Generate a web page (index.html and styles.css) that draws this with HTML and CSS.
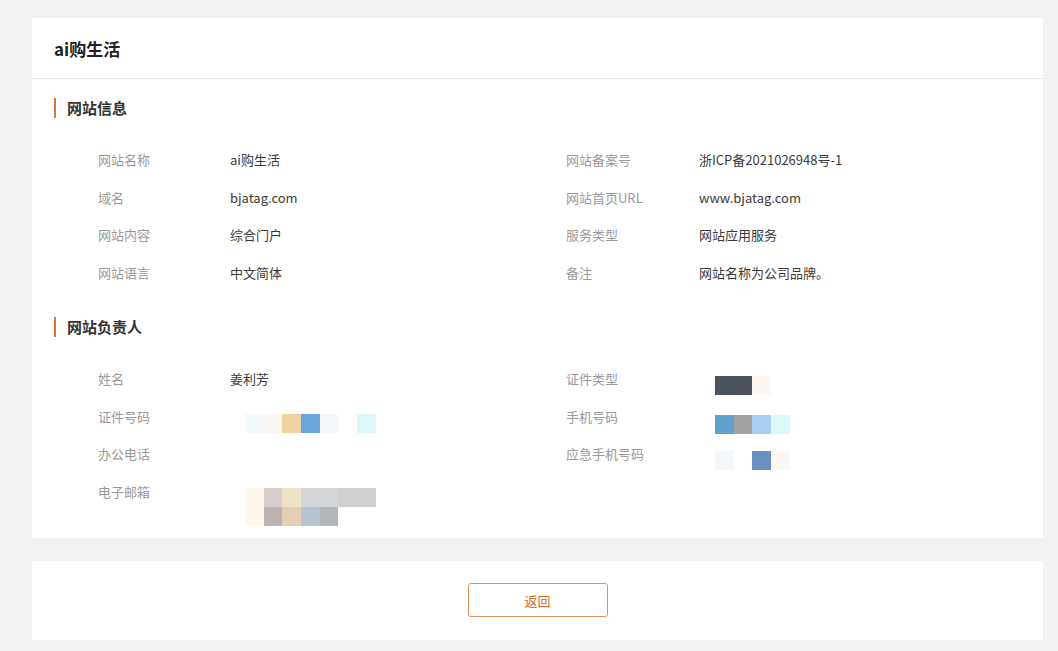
FILE: index.html
```html
<!DOCTYPE html>
<html lang="zh-CN">
<head>
  <meta charset="UTF-8" />
  <meta name="viewport" content="width=device-width, initial-scale=1" />
  <title>ai购生活</title>
  <link rel="stylesheet" href="styles.css">
</head>
<body>

  <div class="page">
    <div class="card">
      <div class="card-head">ai购生活</div>

      <div class="card-body">
        <div class="section-title">网站信息</div>
        <div class="info-grid">
          <div class="label">网站名称</div>
          <div class="value">ai购生活</div>
          <div class="label">网站备案号</div>
          <div class="value">浙ICP备2021026948号-1</div>

          <div class="label">域名</div>
          <div class="value">bjatag.com</div>
          <div class="label">网站首页URL</div>
          <div class="value">www.bjatag.com</div>

          <div class="label">网站内容</div>
          <div class="value">综合门户</div>
          <div class="label">服务类型</div>
          <div class="value">网站应用服务</div>

          <div class="label">网站语言</div>
          <div class="value">中文简体</div>
          <div class="label">备注</div>
          <div class="value">网站名称为公司品牌。</div>
        </div>

        <div class="section-title">网站负责人</div>
        <div class="info-grid">
          <div class="label">姓名</div>
          <div class="value">姜利芳</div>
          <div class="label">证件类型</div>
          <div class="value">
            <div class="mosaic m-type">
              <span class="c-slate"></span><span class="c-slate2"></span><span class="c-blush"></span>
            </div>
          </div>

          <div class="label">证件号码</div>
          <div class="value">
            <div class="mosaic m-id">
              <span class="c-mint"></span><span class="c-blush"></span><span class="c-tan"></span><span class="c-blue"></span><span class="c-ice"></span><span></span><span class="c-cyan"></span>
            </div>
          </div>
          <div class="label">手机号码</div>
          <div class="value">
            <div class="mosaic m-phone">
              <span class="c-sky"></span><span class="c-grey"></span><span class="c-pale"></span><span class="c-cyan"></span>
            </div>
          </div>

          <div class="label">办公电话</div>
          <div class="value"></div>
          <div class="label">应急手机号码</div>
          <div class="value">
            <div class="mosaic m-urgent">
              <span class="c-ice"></span><span></span><span class="c-steel"></span><span class="c-blush"></span>
            </div>
          </div>

          <div class="label">电子邮箱</div>
          <div class="value">
            <div class="mosaic m-mail">
              <span class="c-cream"></span><span class="c-rose"></span><span class="c-sand"></span><span class="c-ash"></span><span class="c-ash"></span><span class="c-ash2"></span><span class="c-ash2"></span>
              <span class="c-cream"></span><span class="c-mauve"></span><span class="c-wheat"></span><span class="c-fog"></span><span class="c-stone"></span><span></span><span></span>
            </div>
          </div>
          <div class="label"></div>
          <div class="value"></div>
        </div>
      </div>
    </div>

    <div class="card card-foot">
      <button class="btn-back">返回</button>
    </div>
  </div>

</body>
</html>
```

FILE: styles.css
```css
* { margin: 0; padding: 0; box-sizing: border-box; }
html, body {
  width: 100%; height: 100%;
  background: #f2f2f2;
  font-family: "Noto Sans CJK SC", "Noto Sans", sans-serif;
  font-size: 13px;
  color: #333;
  overflow: hidden;
}
.page {
  width: 1011px;
  margin-left: 32px;
  padding-top: 18px;
  display: flex;
  flex-direction: column;
  gap: 23px;
}
.card { background: #fff; }
.card-head {
  height: 61px;
  padding-left: 22px;
  display: flex;
  align-items: center;
  font-size: 17px;
  font-weight: bold;
  color: #222;
  border-bottom: 1px solid #e6e6e6;
}
.card-body { padding: 19px 0 28px; }
.section-title {
  height: 20px;
  line-height: 20px;
  padding-left: 11px;
  margin-left: 22px;
  border-left: 2px solid #d6773a;
  font-size: 15px;
  font-weight: bold;
  color: #333;
  margin-bottom: 23px;
}
.info-grid {
  display: grid;
  grid-template-columns: 132px 336px 133px 1fr;
  grid-auto-rows: 37.5px;
  padding-left: 66px;
  margin-bottom: 26px;
}
.info-grid:last-child { margin-bottom: 0; grid-template-rows: repeat(4, 37.5px); }
.label, .value { line-height: 37.5px; white-space: nowrap; }
.label { color: #999; }
.value { color: #3a3a3a; }

/* blurred personal data */
.mosaic {
  display: grid;
  grid-auto-rows: 19px;
  grid-template-columns: repeat(7, 18.7px);
  filter: blur(0.5px);
}
.m-id { margin: 16.5px 0 0 15px; }
.m-mail { margin: 15.5px 0 0 15px; }
.m-type { margin: 16px 0 0 16px; grid-template-columns: repeat(3, 18.7px); }
.m-phone { margin: 17.5px 0 0 16px; grid-template-columns: repeat(4, 18.7px); }
.m-urgent { margin: 16px 0 0 16px; grid-template-columns: repeat(4, 18.7px); }
.c-mint { background: #f4fafb; }
.c-blush { background: #fdf7f4; }
.c-tan { background: #efd3a3; }
.c-blue { background: #6aa6dc; }
.c-ice { background: #f3f6fa; }
.c-cyan { background: #dcf9fa; }
.c-slate { background: #4a535e; }
.c-slate2 { background: #4d5159; }
.c-sky { background: #62a2cf; }
.c-grey { background: #a3a3a3; }
.c-pale { background: #a9cff3; }
.c-steel { background: #6a90c2; }
.c-cream { background: #fdf7ec; }
.c-rose { background: #d6cdcd; }
.c-sand { background: #ede2c6; }
.c-ash { background: #d2d6d8; }
.c-ash2 { background: #d0d0d0; }
.c-mauve { background: #bcb2b4; }
.c-wheat { background: #e5cfb4; }
.c-fog { background: #b7c3cf; }
.c-stone { background: #b2b6b9; }

.card-foot {
  height: 79px;
  display: flex;
  justify-content: center;
  padding-top: 22px;
}
.btn-back {
  width: 140px;
  height: 34px;
  background: #fff;
  border: 1px solid #e0935a;
  border-radius: 3px;
  color: #e0662a;
  font-family: inherit;
  font-size: 13px;
  cursor: pointer;
}
```
